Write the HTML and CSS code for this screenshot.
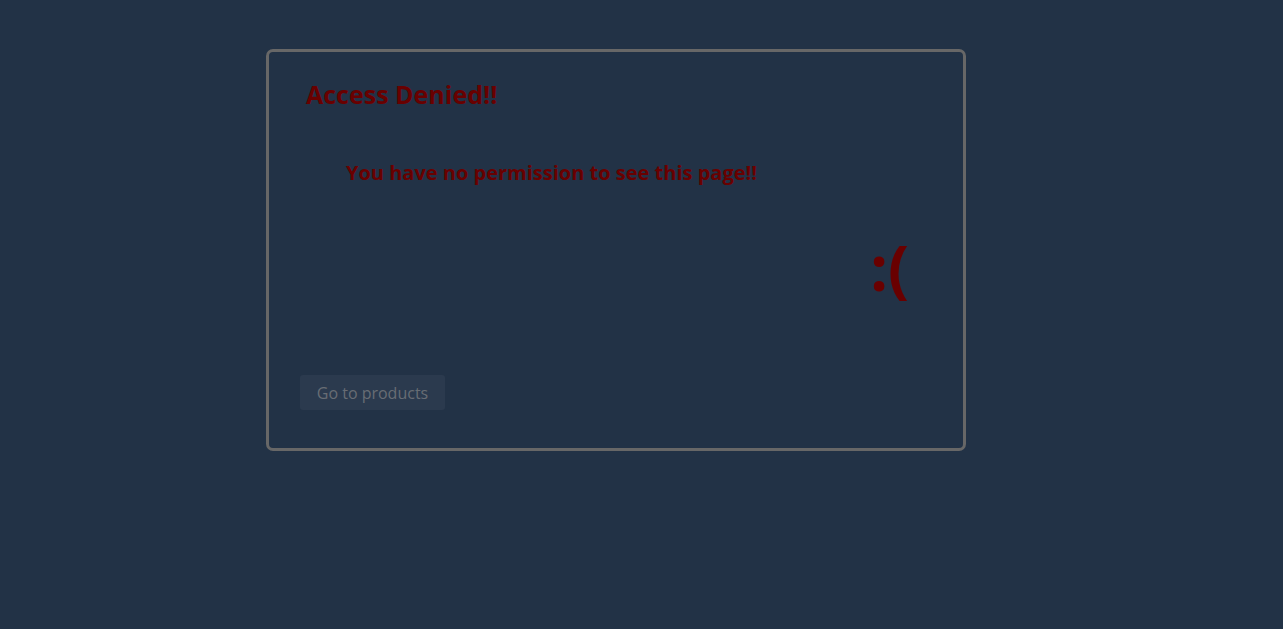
FILE: index.html
```html
<!DOCTYPE html>
<html>
<head>
<meta charset="utf-8">
<link rel="stylesheet" href="styles.css">
</head>
<body>
<div class="page">
  <div class="card">
    <h2 class="title">Access Denied!!</h2>
    <p class="message">You have no permission to see this page!!</p>
    <div class="face-row"><span class="face">:(</span></div>
    <div class="actions"><button class="btn">Go to products</button></div>
  </div>
</div>
</body>
</html>
```
FILE: styles.css
```css
html, body {
  margin: 0;
  padding: 0;
  background: #223246;
  height: 100%;
}
body {
  font-family: "Open Sans", "Noto Sans", sans-serif;
}
.page {
  padding: 49px 0 0 266px;
}
.card {
  box-sizing: border-box;
  width: 700px;
  height: 402px;
  border: 3px solid #676767;
  border-radius: 7px;
  padding: 0 0 0 31px;
  display: flex;
  flex-direction: column;
}
.title {
  margin: 24px 0 0 6px;
  font-size: 25px;
  line-height: 36px;
  font-weight: 700;
  color: #690000;
}
.message {
  margin: 47px 0 0 46px;
  font-size: 20px;
  line-height: 28px;
  font-weight: 700;
  color: #690000;
}
.face-row {
  display: flex;
  justify-content: flex-end;
  padding-right: 54px;
  margin-top: 45px;
}
.face {
  font-size: 62px;
  line-height: 70px;
  font-weight: 700;
  color: #690000;
}
.actions {
  margin-top: 73px;
}
.btn {
  font-family: inherit;
  width: 145px;
  height: 35px;
  border: none;
  border-radius: 3px;
  background: #2b3a4e;
  color: #686d74;
  font-size: 16px;
  padding: 0;
  cursor: pointer;
}
```
